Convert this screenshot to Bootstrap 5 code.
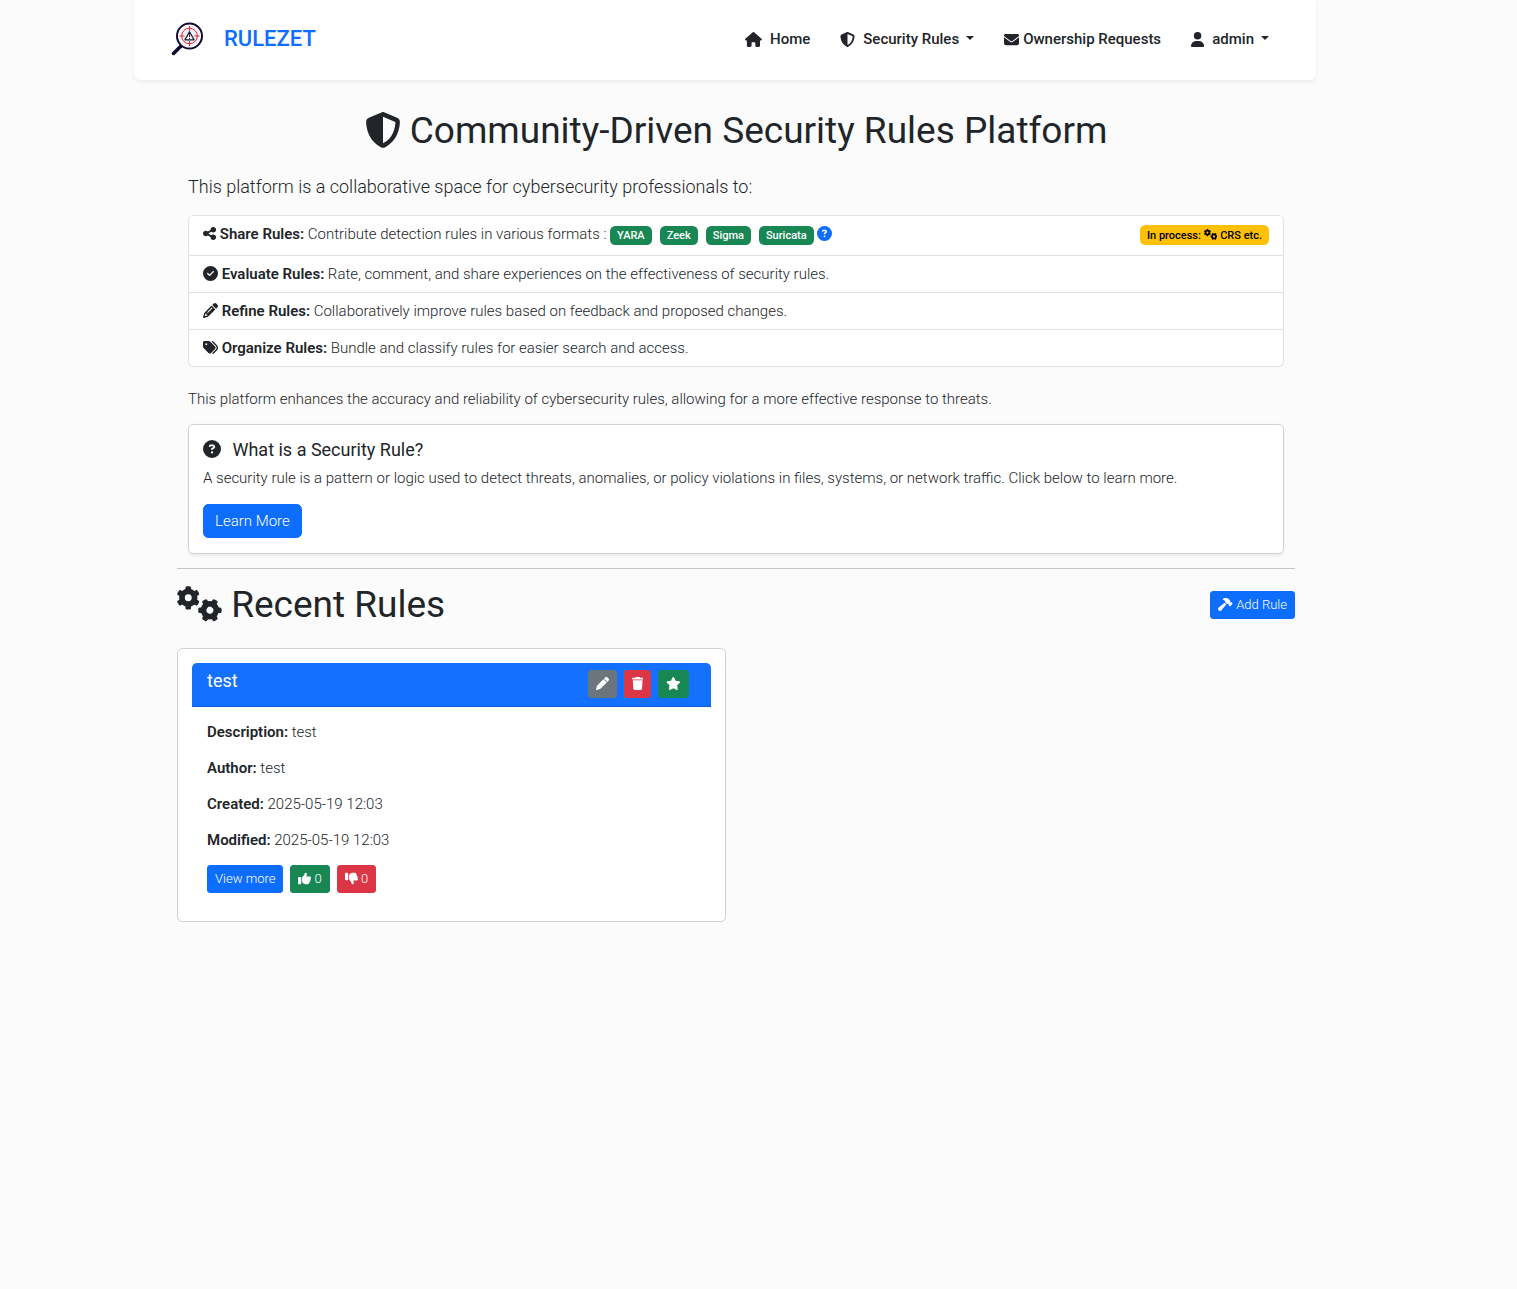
<!DOCTYPE html>
<html lang="en">
<head>
<meta charset="utf-8">
<meta name="viewport" content="width=device-width, initial-scale=1">
<title>Rulezet</title>
<link href="https://cdn.jsdelivr.net/npm/bootstrap@5.3.0/dist/css/bootstrap.min.css" rel="stylesheet">
<style>
html{font-size:14px}
body{font-family:Roboto,"Noto Sans",sans-serif;font-size:15px;font-weight:300;line-height:22px;background:#fbfbfb;color:#212529}
b,strong{font-weight:600}
.page-shell{padding:0 201px 0 134px}
.site-nav{height:80px;padding:0 32px 3px 36px;background:#fff;border-radius:0 0 6px 6px}
.brand-link{gap:18px}
.brand-name{font-size:22px;font-weight:500;color:#0d6efd}
.site-nav .navbar-nav .nav-link{color:#212529;font-weight:500;padding:8px 15px;white-space:nowrap}
.site-nav .dropdown-toggle::after{margin-left:7px}
.ico{height:1em;width:1em;vertical-align:-.125em;fill:currentColor}
.ico-w{width:1.125em}
.ico-n{width:.875em}
.ico-x{width:1.25em}
.site-nav .ico{vertical-align:-3px;margin-right:8px}
.site-nav .ico-tight{margin-right:4px}
.page-main{padding:29px 21px 0 43px}
.intro-block{padding:0 11px}
.page-title{font-size:37px;font-weight:400;line-height:44px;margin:0}
.page-title .ico{font-size:36px}
.intro-lead{font-size:18px;line-height:28px;font-weight:300;margin:20px 0 14px}
.list-group-item{padding:7px 14px;background:#fff;color:#212529}
.badge{font-size:11px;line-height:11px;font-weight:500;padding:4px 7px}
.fmt-row{padding-bottom:10px}
.fmt-badges{gap:8px}
.fmt-row .badge{margin-top:2px}
.info-card{padding:14px 14px 15px;margin-top:14px}
.card{--bs-card-border-color:#d0d1d2}
.info-title{font-size:18px;line-height:22px;font-weight:400;margin:0 0 6px}
.info-text{margin-bottom:15px}
.btn{font-size:15px;line-height:22px;padding:5px 11px;font-weight:300}
.btn-sm{font-size:13px;line-height:20px;padding:3px 7px;border-radius:3px}
.rule-head{height:44px;padding:7px 22px 7px 15px;background:#1470ff;border-radius:5px 5px 0 0;border-bottom:1px solid #0d5ad2;color:#fff}
.rule-name{font-size:18px;line-height:22px;font-weight:400;margin:0}
.rule-body{padding:14px 15px}
.rule-body p{margin:0 0 14px}
hr{margin:14px 0;border-color:#212529}
</style>
</head>
<body>
<svg class="d-none" xmlns="http://www.w3.org/2000/svg">
<symbol id="i-house" viewBox="0 0 576 512"><path d="M575.8 255.5c0 18-15 32.1-32 32.1h-32l.7 160.2c0 2.7-.2 5.4-.5 8.1V472c0 22.1-17.9 40-40 40H392c-22.1 0-40-17.9-40-40V384c0-17.700-14.300-32-32-32H256c-17.700 0-32 14.300-32 32v88c0 22.100-17.900 40-40 40H104c-22.100 0-40-17.900-40-40V287.600H32c-18 0-32-14-32-32.100c0-9 3-17 10-24L266.400 8c7-7 15-8 22-8s15 2 21 7L564.800 231.500c8 7 12 15 11 24z"/></symbol>
<symbol id="i-shield" viewBox="0 0 512 512"><path d="M256 0c4.6 0 9.2 1 13.4 2.9L457.700 82.800c22 9.300 38.400 31 38.300 57.200c-.5 99.200-41.300 280.700-213.600 363.200c-16.700 8-36.100 8-52.800 0C57.300 420.700 16.500 239.200 16 140c-.1-26.200 16.300-47.900 38.300-57.200L242.700 2.900C246.800 1 251.400 0 256 0zm0 66.800V444.800C394 378 431.100 230.100 432 141.400L256 66.800z"/></symbol>
<symbol id="i-mail" viewBox="0 0 512 512"><path d="M48 64C21.500 64 0 85.500 0 112c0 15.100 7.100 29.300 19.200 38.400L236.800 313.600c11.400 8.500 27 8.500 38.400 0L492.800 150.400c12.100-9.100 19.200-23.300 19.200-38.400c0-26.500-21.500-48-48-48H48zM0 176V384c0 35.300 28.700 64 64 64H448c35.300 0 64-28.700 64-64V176L294.400 339.200c-22.800 17.100-54 17.100-76.800 0L0 176z"/></symbol>
<symbol id="i-user" viewBox="0 0 448 512"><path d="M224 256A128 128 0 1 0 224 0a128 128 0 1 0 0 256zm-45.700 48C79.800 304 0 383.800 0 482.300C0 498.700 13.300 512 29.700 512H418.300c16.400 0 29.700-13.300 29.700-29.700C448 383.800 368.200 304 269.700 304H178.300z"/></symbol>
<symbol id="i-share" viewBox="0 0 448 512"><path d="M352 224c53 0 96-43 96-96s-43-96-96-96s-96 43-96 96c0 4 .2 8 .7 11.900l-94.100 47C145.400 170.200 121.900 160 96 160c-53 0-96 43-96 96s43 96 96 96c25.900 0 49.400-10.200 66.600-26.900l94.100 47c-.5 3.900-.7 7.800-.7 11.900c0 53 43 96 96 96s96-43 96-96s-43-96-96-96c-25.900 0-49.400 10.200-66.600 26.900l-94.100-47c.5-3.900 .7-7.800 .7-11.900s-.2-8-.7-11.900l94.100-47C302.600 213.800 326.100 224 352 224z"/></symbol>
<symbol id="i-check" viewBox="0 0 512 512"><path d="M256 512A256 256 0 1 0 256 0a256 256 0 1 0 0 512zM369 209L241 337c-9.400 9.400-24.600 9.400-33.900 0l-64-64c-9.400-9.400-9.400-24.600 0-33.900s24.600-9.400 33.900 0l47 47L335 175c9.400-9.400 24.600-9.400 33.900 0s9.400 24.600 0 33.900z"/></symbol>
<symbol id="i-help" viewBox="0 0 512 512"><path d="M256 512A256 256 0 1 0 256 0a256 256 0 1 0 0 512zM169.800 165.300c7.900-22.300 29.100-37.300 52.800-37.300h58.300c34.900 0 63.100 28.300 63.100 63.100c0 22.600-12.100 43.500-31.700 54.800L280 264.400c-.2 13-10.900 23.600-24 23.600c-13.300 0-24-10.700-24-24V250.500c0-8.600 4.600-16.500 12.100-20.800l44.300-25.400c4.700-2.700 7.600-7.700 7.600-13.100c0-8.400-6.800-15.100-15.100-15.100H222.600c-3.400 0-6.400 2.100-7.500 5.300l-.4 1.200c-4.400 12.500-18.200 19-30.600 14.600s-19-18.200-14.600-30.600l.4-1.200zM224 352a32 32 0 1 1 64 0 32 32 0 1 1 -64 0z"/></symbol>
<symbol id="i-pencil" viewBox="0 0 512 512"><path d="M410.300 231l11.300-11.300-33.900-33.900-62.100-62.100L291.700 89.800l-11.300 11.300-22.600 22.600L58.600 322.900c-10.400 10.400-18 23.300-22.200 37.400L1 480.700c-2.500 8.400-.2 17.500 6.100 23.700s15.300 8.500 23.700 6.100l120.300-35.400c14.100-4.200 27-11.800 37.400-22.200L387.700 253.700 410.300 231zM160 399.400l-9.100 22.700c-4 3.100-8.500 5.400-13.300 6.900L59.400 452l23-78.100c1.400-4.900 3.800-9.400 6.900-13.300l22.700-9.100v32c0 8.800 7.200 16 16 16h32zM362.700 18.700L348.300 33.200 325.700 55.800 314.300 67.100l33.900 33.900 62.100 62.100 33.900 33.900 11.300-11.300 22.600-22.600 14.500-14.500c25-25 25-65.500 0-90.500L453.300 18.700c-25-25-65.500-25-90.500 0zm-47.400 168l-144 144c-6.200 6.200-16.400 6.200-22.600 0s-6.200-16.400 0-22.600l144-144c6.200-6.200 16.400-6.200 22.600 0s6.200 16.400 0 22.600z"/></symbol>
<symbol id="i-pen" viewBox="0 0 512 512"><path d="M362.700 19.300L314.300 67.700 444.300 197.700l48.400-48.400c25-25 25-65.500 0-90.500L453.300 19.300c-25-25-65.500-25-90.500 0zm-71 71L58.600 323.500c-10.400 10.400-18 23.300-22.200 37.400L1 481.200C-1.500 489.700 .8 498.800 7 505s15.300 8.500 23.700 6.100l120.300-35.400c14.100-4.200 27-11.800 37.400-22.200L421.700 220.300 291.700 90.300z"/></symbol>
<symbol id="i-tags" viewBox="0 0 512 512"><path d="M345 39.100L472.800 168.400c52.400 53 52.400 138.200 0 191.200L360.800 472.900c-9.300 9.400-24.500 9.500-33.900 .2s-9.500-24.500-.2-33.900L438.600 325.900c33.900-34.300 33.900-89.400 0-123.700L310.900 72.900c-9.300-9.400-9.200-24.600 .2-33.900s24.600-9.200 33.900 .2zM0 229.500V80C0 53.500 21.500 32 48 32H197.500c17 0 33.300 6.700 45.300 18.700l168 168c25 25 25 65.500 0 90.500L277.300 442.700c-25 25-65.500 25-90.500 0l-168-168C6.700 262.700 0 246.500 0 229.500zM144 144a32 32 0 1 0 -64 0 32 32 0 1 0 64 0z"/></symbol>
<symbol id="i-star" viewBox="0 0 576 512"><path d="M316.900 18C311.600 7 300.400 0 288.100 0s-23.400 7-28.800 18L195 150.300 51.400 171.500c-12 1.800-22 10.200-25.700 21.700s-.7 24.200 7.900 32.700L137.800 329 113.200 474.700c-2 12 3 24.200 12.900 31.300s23 8 33.800 2.300l128.300-68.500 128.300 68.500c10.800 5.700 23.900 4.900 33.800-2.300s14.900-19.300 12.900-31.300L438.500 329 542.700 225.900c8.600-8.500 11.700-21.200 7.900-32.700s-13.700-19.900-25.700-21.700L381.200 150.300 316.900 18z"/></symbol>
<symbol id="i-trash" viewBox="0 0 448 512"><path d="M135.200 17.700L128 32H32C14.300 32 0 46.300 0 64S14.300 96 32 96H416c17.700 0 32-14.300 32-32s-14.300-32-32-32H320l-7.200-14.300C307.400 6.800 296.300 0 284.200 0H163.800c-12.100 0-23.200 6.800-28.600 17.700zM416 128H32L53.200 467c1.600 25.300 22.600 45 47.900 45H346.900c25.300 0 46.300-19.700 47.900-45L416 128z"/></symbol>
<symbol id="i-up" viewBox="0 0 512 512"><path id="thumb" d="M313.400 32.900c26 5.200 42.900 30.500 37.700 56.500l-2.300 11.400c-5.300 26.700-15.100 52.100-28.800 75.200H464c26.500 0 48 21.500 48 48c0 18.500-10.500 34.600-25.900 42.600C497 275.400 504 288.900 504 304c0 23.400-16.800 42.900-38.900 47.100c4.400 7.300 6.900 15.800 6.900 24.900c0 21.300-13.900 39.400-33.100 45.600c.7 3.300 1.100 6.800 1.100 10.400c0 26.500-21.500 48-48 48H294.500c-19 0-37.500-5.600-53.300-16.100l-38.500-25.700C176 420.400 160 390.400 160 358.300V247.100c0-29.200 13.300-56.700 36-75l7.400-5.900c26.500-21.200 44.600-51 51.200-84.200l2.300-11.400c5.200-26 30.500-42.900 56.500-37.700zM32 192H96c17.700 0 32 14.300 32 32V448c0 17.700-14.300 32-32 32H32c-17.700 0-32-14.300-32-32V224c0-17.700 14.300-32 32-32z"/></symbol>
<symbol id="i-down" viewBox="0 0 512 512"><use href="#thumb" transform="matrix(1 0 0 -1 0 512)"/></symbol>
<symbol id="i-hammer" viewBox="0 0 576 512"><path d="M413.500 237.500c-28.200 4.800-58.200-3.600-80-25.400l-38.100-38.100C280.400 159 272 138.800 272 117.600V105.500L192.300 62c-5.300-2.900-8.600-8.600-8.300-14.700s3.900-11.500 9.500-14l47.200-21C259.100 4.200 279 0 299.200 0h18.100c36.700 0 72 14 98.700 39.100l44.600 42c24.200 22.800 33.200 55.700 26.600 86L503 183l8-8c9.400-9.400 24.600-9.400 33.900 0l24 24c9.400 9.400 9.400 24.600 0 33.900l-88 88c-9.400 9.400-24.600 9.400-33.900 0l-24-24c-9.400-9.400-9.400-24.600 0-33.900l8-8-17.500-17.500zM27.400 377.100L260.900 182.600c3.500 4.900 7.500 9.600 11.800 14l38.100 38.100c6 6 12.400 11.200 19.200 15.700L134.900 484.600c-14.500 17.400-36 27.400-58.600 27.400C34.100 512 0 477.800 0 435.700c0-22.600 10.100-44.100 27.400-58.600z"/></symbol>
<symbol id="i-gears" viewBox="0 0 640 512">
<g id="gear"><circle cx="160" cy="168" r="90" fill="none" stroke="currentColor" stroke-width="82"/><g id="teeth"><rect x="120" y="2" width="80" height="76" rx="22"/><rect x="120" y="258" width="80" height="76" rx="22"/></g><use href="#teeth" transform="rotate(60 160 168)"/><use href="#teeth" transform="rotate(120 160 168)"/></g>
<use href="#gear" transform="translate(308 176) rotate(30 160 168)"/></symbol>
</svg>

<div class="page-shell">
<nav class="site-nav navbar-expand d-flex align-items-center justify-content-between shadow-sm">
  <a href="#" class="brand-link d-flex align-items-center text-decoration-none">
    <svg width="36" height="36" viewBox="0 0 36 36" aria-label="Rulezet logo" role="img">
      <path d="M3.500 32.500L11 25" stroke="#120a2e" stroke-width="3.500" stroke-linecap="round"/><path d="M10 26l3.500-3.500" stroke="#120a2e" stroke-width="2"/>
      <circle cx="19.500" cy="15" r="12.500" fill="#fff" stroke="#120a2e" stroke-width="2"/>
      <circle cx="19.500" cy="15" r="10.500" fill="#eef3f8"/>
      <circle cx="19.500" cy="15" r="7.800" fill="none" stroke="#e8282d" stroke-width="1"/>
      <path d="M19.500 5v5M19.500 20v5M9.500 15h5M24.500 15h5" stroke="#e8282d" stroke-width="1"/>
      <path d="M19.500 10.800l4.500 8h-9z" fill="#fff" stroke="#1c1838" stroke-width="1.300" stroke-linejoin="round"/><path d="M19.500 13.300v2.800M19.500 17v1" stroke="#1c1838"/>
    </svg>
    <span class="brand-name">RULEZET</span>
  </a>
  <ul class="navbar-nav">
    <li class="nav-item"><a class="nav-link" href="#"><svg class="ico ico-w"><use href="#i-house"/></svg>Home</a></li>
    <li class="nav-item"><a class="nav-link dropdown-toggle" href="#" role="button" data-bs-toggle="dropdown"><svg class="ico"><use href="#i-shield"/></svg>Security Rules</a></li>
    <li class="nav-item"><a class="nav-link" href="#"><svg class="ico ico-tight"><use href="#i-mail"/></svg>Ownership Requests</a></li>
    <li class="nav-item"><a class="nav-link dropdown-toggle" href="#" role="button" data-bs-toggle="dropdown"><svg class="ico ico-n"><use href="#i-user"/></svg>admin</a></li>
  </ul>
</nav>

<main class="page-main">
  <section class="intro-block">
    <h1 class="page-title text-center"><svg class="ico"><use href="#i-shield"/></svg> Community-Driven Security Rules Platform</h1>
    <p class="intro-lead">This platform is a collaborative space for cybersecurity professionals to:</p>
    <ul class="list-group">
      <li class="list-group-item fmt-row d-flex justify-content-between align-items-center">
        <div class="d-flex align-items-center"><span class="me-1"><svg class="ico ico-n"><use href="#i-share"/></svg> <strong>Share Rules:</strong> Contribute detection rules in various formats :</span>
          <span class="fmt-badges d-flex me-1"><span class="badge text-bg-success">YARA</span><span class="badge text-bg-success">Zeek</span><span class="badge text-bg-success">Sigma</span><span class="badge text-bg-success">Suricata</span></span>
          <a href="#" aria-label="Supported formats"><svg class="ico"><use href="#i-help"/></svg></a></div>
        <span class="badge text-bg-warning">In process: <svg class="ico ico-x"><use href="#i-gears"/></svg> CRS etc.</span>
      </li>
      <li class="list-group-item"><svg class="ico"><use href="#i-check"/></svg> <strong>Evaluate Rules:</strong> Rate, comment, and share experiences on the effectiveness of security rules.</li>
      <li class="list-group-item"><svg class="ico"><use href="#i-pencil"/></svg> <strong>Refine Rules:</strong> Collaboratively improve rules based on feedback and proposed changes.</li>
      <li class="list-group-item"><svg class="ico"><use href="#i-tags"/></svg> <strong>Organize Rules:</strong> Bundle and classify rules for easier search and access.</li>
    </ul>
    <p class="mt-4 mb-0">This platform enhances the accuracy and reliability of cybersecurity rules, allowing for a more effective response to threats.</p>
    <div class="card info-card shadow-sm">
      <h2 class="info-title"><svg class="ico me-2"><use href="#i-help"/></svg> What is a Security Rule?</h2>
      <p class="info-text">A security rule is a pattern or logic used to detect threats, anomalies, or policy violations in files, systems, or network traffic. Click below to learn more.</p>
      <div><button type="button" class="btn btn-primary">Learn More</button></div>
    </div>
  </section>
  <hr>
  <div class="d-flex justify-content-between align-items-center">
    <h2 class="page-title"><svg class="ico ico-x"><use href="#i-gears"/></svg> Recent Rules</h2>
    <button type="button" class="btn btn-primary btn-sm"><svg class="ico ico-w"><use href="#i-hammer"/></svg> Add Rule</button>
  </div>
  <div class="row mt-4 gx-4">
    <div class="col-6">
      <article class="card p-3">
        <header class="rule-head d-flex justify-content-between">
          <h3 class="rule-name">test</h3>
          <div class="d-flex gap-2 align-items-start">
            <button type="button" class="btn btn-secondary btn-sm" aria-label="Edit"><svg class="ico"><use href="#i-pen"/></svg></button>
            <button type="button" class="btn btn-danger btn-sm" aria-label="Delete"><svg class="ico ico-n"><use href="#i-trash"/></svg></button>
            <button type="button" class="btn btn-success btn-sm" aria-label="Favorite"><svg class="ico ico-w"><use href="#i-star"/></svg></button>
          </div>
        </header>
        <div class="rule-body">
          <p><strong>Description:</strong> test</p>
          <p><strong>Author:</strong> test</p>
          <p><strong>Created:</strong> 2025-05-19 12:03</p>
          <p><strong>Modified:</strong> 2025-05-19 12:03</p>
          <div class="d-flex gap-2">
            <button type="button" class="btn btn-primary btn-sm">View more</button>
            <button type="button" class="btn btn-success btn-sm"><svg class="ico"><use href="#i-up"/></svg> 0</button>
            <button type="button" class="btn btn-danger btn-sm"><svg class="ico"><use href="#i-down"/></svg> 0</button>
          </div>
        </div>
      </article>
    </div>
  </div>
</main>
</div>
<script src="https://cdn.jsdelivr.net/npm/bootstrap@5.3.0/dist/js/bootstrap.bundle.min.js"></script>
</body>
</html>
